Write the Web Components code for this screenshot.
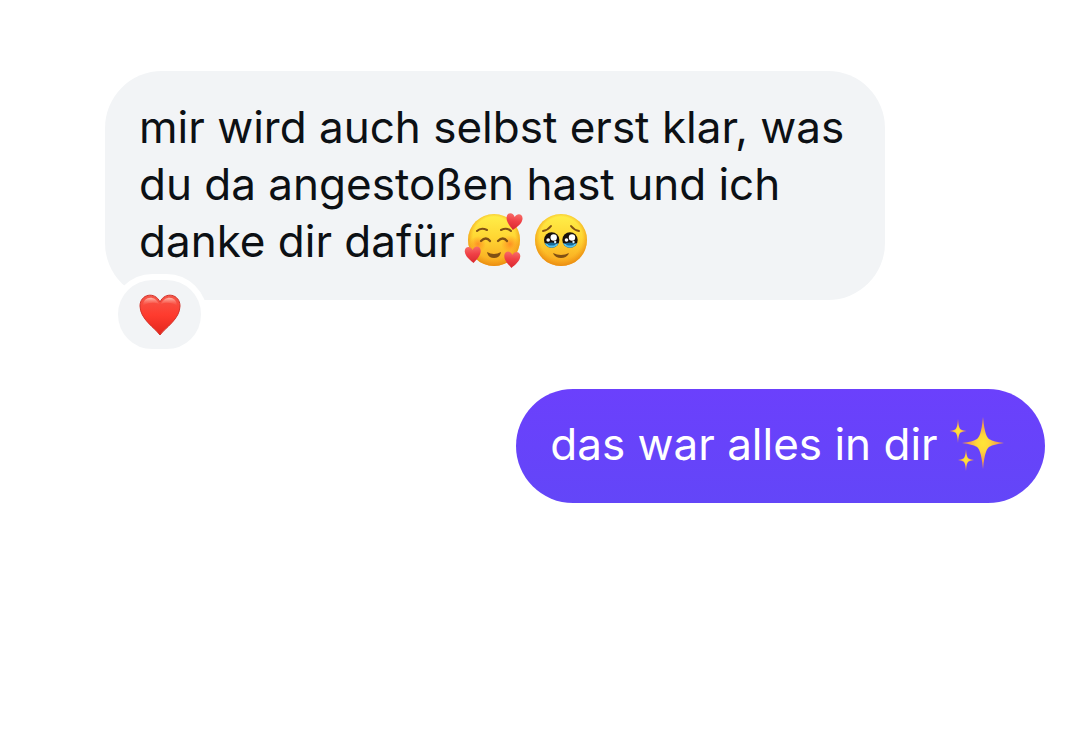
<!DOCTYPE html>
<html lang="de">
<head>
<meta charset="utf-8">
<meta name="viewport" content="width=device-width, initial-scale=1">
<title>Chat</title>
<style>
  body { margin: 0; background: #fff; font-family: Inter, "Liberation Sans", sans-serif; }
</style>
</head>
<body>
<chat-thread>
  <chat-message>mir wird auch selbst erst klar, was du da angestoßen hast und ich danke dir dafür <chat-emoji name="hearts-face"></chat-emoji> <chat-emoji name="tearful-face"></chat-emoji><chat-reaction slot="reaction"><chat-emoji name="heart"></chat-emoji></chat-reaction></chat-message>
  <chat-message from="me">das war alles in dir <chat-emoji name="sparkles"></chat-emoji></chat-message>
</chat-thread>

<script>
const EMOJI = {
  'hearts-face': ['Lächelndes Gesicht mit Herzen', `
    <defs>
      <linearGradient id="f" x1="0" y1="0" x2="0" y2="1"><stop offset="0" stop-color="#fff04a"/><stop offset=".45" stop-color="#ffd633"/><stop offset="1" stop-color="#f9a51e"/></linearGradient>
      <radialGradient id="e" cx=".5" cy=".46" r=".54"><stop offset=".75" stop-color="#f29a17" stop-opacity="0"/><stop offset="1" stop-color="#e88a10" stop-opacity=".9"/></radialGradient>
      <radialGradient id="b"><stop offset="0" stop-color="#ff6a1c" stop-opacity=".6"/><stop offset="1" stop-color="#ff7a1c" stop-opacity="0"/></radialGradient>
      <linearGradient id="h" x1="0" y1="0" x2="0" y2="1"><stop offset="0" stop-color="#f76d68"/><stop offset=".45" stop-color="#f04046"/><stop offset="1" stop-color="#d9282f"/></linearGradient>
      <path id="k" d="M0 8C-3 5-8 1-8-4C-8-9-2-10 0-5C2-10 8-9 8-4C8 1 3 5 0 8Z" fill="url(#h)"/>
    </defs>
    <circle cx="27" cy="27" r="26" fill="url(#f)"/><circle cx="27" cy="27" r="26" fill="url(#e)"/>
    <circle cx="11" cy="31" r="8" fill="url(#b)"/><circle cx="43" cy="31" r="9" fill="url(#b)"/>
    <g fill="none" stroke="#805014" stroke-linecap="round" stroke-width="2">
      <path d="M10 18Q14 14 20 17M34 17Q40 14 44 18"/>
      <path d="M14 28Q19 23 23 28M31 28Q36 23 40 28" stroke-width="2.3"/>
    </g>
    <path d="M20 39Q27 43 34 39Q33 45 27 45Q21 45 20 39Z" fill="#805014"/>
    <use href="#k" transform="translate(47 9) rotate(8)"/>
    <use href="#k" transform="translate(6 42) rotate(-4)"/>
    <use href="#k" transform="translate(45 47) rotate(4)"/>`],
  'tearful-face': ['Gesicht, das Tränen zurückhält', `
    <defs>
      <linearGradient id="f" x1="0" y1="0" x2="0" y2="1"><stop offset="0" stop-color="#fff04a"/><stop offset=".45" stop-color="#ffd633"/><stop offset="1" stop-color="#f9a51e"/></linearGradient>
      <radialGradient id="e" cx=".5" cy=".46" r=".54"><stop offset=".75" stop-color="#f29a17" stop-opacity="0"/><stop offset="1" stop-color="#e88a10" stop-opacity=".9"/></radialGradient>
      <clipPath id="c"><circle r="7.7"/></clipPath>
      <g id="y">
        <circle r="7.7" fill="#18100c"/>
        <g clip-path="url(#c)"><path d="M-8 3Q0 5 8 3V8H-8Z" fill="#55c4f0"/><ellipse cy="4" rx="4" ry="1.5" fill="#176a9a"/></g>
        <circle cx="2" cy="-2.5" r="3.2" fill="#fff"/><circle cx="-3.5" cy="0" r="1.8" fill="#fff"/><circle cx="3.5" cy="2" r="1.2" fill="#d8f0fa"/>
      </g>
    </defs>
    <circle cx="27" cy="27" r="26" fill="url(#f)"/><circle cx="27" cy="27" r="26" fill="url(#e)"/>
    <path d="M9 18Q14 17 17 13M37 13Q40 17 45 18" fill="none" stroke="#805014" stroke-linecap="round" stroke-width="2"/>
    <use href="#y" x="17.700" y="27"/><use href="#y" x="36" y="27"/>
    <path d="M19 40Q27 44 35 40Q33 45 27 45Q21 45 19 40Z" fill="#805014"/>`],
  'heart': ['Rotes Herz', `
    <defs>
      <linearGradient id="h" x1="0" y1="0" x2="0" y2="1"><stop offset="0" stop-color="#f4574a"/><stop offset=".5" stop-color="#ff3b2e"/><stop offset="1" stop-color="#e3261c"/></linearGradient>
      <linearGradient id="g" x1="0" y1="0" x2="0" y2="1"><stop offset="0" stop-color="#ffc4b8" stop-opacity=".9"/><stop offset="1" stop-color="#ff6a5a" stop-opacity="0"/></linearGradient>
    </defs>
    <path d="M27 47C22 40 7 31 7 18C7 6 22 3 27 14C32 3 47 6 47 18C47 31 32 40 27 47Z" fill="url(#h)" stroke="#d3342b" stroke-width="1"/>
    <path d="M10 18C10 8 22 7 26 16C22 14 14 14 10 18ZM44 18C44 8 32 7 28 16C32 14 40 14 44 18Z" fill="url(#g)"/>`],
  'sparkles': ['Funkeln', `
    <defs>
      <radialGradient id="s"><stop offset="0" stop-color="#ffe536"/><stop offset=".3" stop-color="#ffd83a"/><stop offset=".75" stop-color="#f09a50"/></radialGradient>
      <path id="t" d="M0-26C1.500-10 4-4.500 7-3.500Q10-1.500 21 0Q10 1.500 7 3.500C4 4.500 1.500 10 0 26C-1.500 10-4 4.500-7 3.500Q-10 1.500-21 0Q-10-1.500-7-3.500C-4-4.500-1.500-10 0-26Z" fill="url(#s)"/>
    </defs>
    <use href="#t" transform="translate(33 27)"/>
    <use href="#t" transform="translate(8 15) scale(.4 .46)"/>
    <use href="#t" transform="translate(16 44) scale(.38 .42)"/>`]
};

customElements.define('chat-emoji', class extends HTMLElement {
  connectedCallback() {
    if (this.shadowRoot) return;
    const [label, art] = EMOJI[this.getAttribute('name')];
    this.attachShadow({ mode: 'open' }).innerHTML = `
      <style>
        :host { display: inline-block; width: 54px; height: 54px; margin-block: -4px; vertical-align: -6px; line-height: 0; }
        svg { display: block; width: 100%; height: 100%; overflow: visible; }
      </style>
      <svg viewBox="0 0 54 54" role="img" aria-label="${label}">${art}</svg>`;
  }
});

customElements.define('chat-reaction', class extends HTMLElement {
  connectedCallback() {
    if (this.shadowRoot) return;
    this.attachShadow({ mode: 'open' }).innerHTML = `
      <style>
        :host { display: block; }
        button {
          display: flex; align-items: center; justify-content: center;
          box-sizing: content-box; width: 83px; height: 69px; padding: 0;
          border: 6px solid #fff; border-radius: 41px;
          background: #f2f4f6; font: inherit; cursor: pointer;
        }
      </style>
      <button type="button" aria-label="Reaktion: Rotes Herz"><slot></slot></button>`;
  }
});

customElements.define('chat-message', class extends HTMLElement {
  connectedCallback() {
    if (this.shadowRoot) return;
    this.attachShadow({ mode: 'open' }).innerHTML = `
      <style>
        :host { display: block; position: relative; max-width: 83%; align-self: flex-start; }
        :host([from="me"]) { align-self: flex-end; }
        p {
          margin: 0; padding: 28px 34px 30px; border-radius: 57px;
          background: #f2f4f6; color: #0c1014;
          font-size: 44px; line-height: 57px;
        }
        :host([from="me"]) p { background: linear-gradient(#6b40fc, #6346f8); color: #fff; padding: 27px 41px 30px 34px; }
        .reaction { position: absolute; left: 7px; top: calc(100% - 26px); }
      </style>
      <p><slot></slot></p>
      <div class="reaction"><slot name="reaction"></slot></div>`;
  }
});

customElements.define('chat-thread', class extends HTMLElement {
  connectedCallback() {
    if (this.shadowRoot) return;
    this.attachShadow({ mode: 'open' }).innerHTML = `
      <style>
        :host { display: block; }
        main { display: flex; flex-direction: column; gap: 89px; padding: 71px 35px 71px 105px; }
      </style>
      <main><slot></slot></main>`;
  }
});
</script>
</body>
</html>
